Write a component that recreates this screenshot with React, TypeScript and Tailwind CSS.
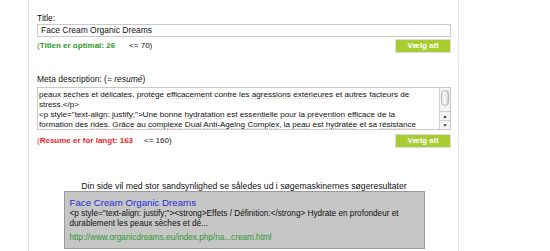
import type { ReactNode } from "react";

// ord med stavekontrol-understregning
function S({ children }: { children: ReactNode }) {
    return (
        <span className="underline decoration-dotted decoration-[#f5c2c2] underline-offset-[1px]">
            {children}
        </span>
    );
}

function VaelgAlt() {
    return (
        <div className="w-[56px] h-[14px] bg-[#a9cc31] border border-[#dcdcdc] text-white font-bold text-[8px] leading-[12px] text-center">
            Vælg alt
        </div>
    );
}

export default function App() {
    return (
        <div className="w-[550px] h-[251px] bg-white overflow-hidden text-[#111]" style={{ fontFamily: '"Liberation Sans", Arial, sans-serif' }}>
            <div className="ml-[28px] w-[431px] h-full border-x border-[#e6e6e6] pl-[8px] pr-[7px] pt-[13px]">
                {/* ---------- TITLE ---------- */}
                <div className="text-[8.5px] leading-[11px]">Title:</div>
                <div className="h-[13px] border border-[#c9c9c9] px-[3px] text-[8.5px] leading-[11px] whitespace-nowrap">
                    Face Cream Organic Dreams
                </div>
                <div className="mt-[2px] flex items-center justify-between">
                    <div className="flex items-center text-[8px] leading-[12px]">
                        <span className="text-[#2f9a2a]">(</span>
                        <span className="text-[#2f9a2a] font-bold">Titlen er optimal: 26</span>
                        <span className="ml-[14px]">&lt;= 70)</span>
                    </div>
                    <VaelgAlt />
                </div>

                {/* ---------- META DESCRIPTION ---------- */}
                <div className="mt-[21px] text-[8.5px] leading-[11px]">
                    Meta description: (= <i>resumé</i>)
                </div>
                <div className="mt-[2px] h-[43px] border border-[#c9c9c9] flex">
                    <div className="flex-1 pl-[1px] pt-[2px] text-[8.1px] leading-[10px] whitespace-nowrap overflow-hidden">
                        <div>
                            <S>peaux</S> <S>sèches</S> et <S>délicates</S>, <S>protège</S> <S>efficacement</S> contre les <S>agressions</S> <S>extérieures</S> et <S>autres</S> <S>facteurs</S> de
                        </div>
                        <div>stress.&lt;/p&gt;</div>
                        <div>
                            &lt;p style="<S>text-align</S>: <S>justify</S>;"&gt;Une bonne <S>hydratation</S> est <S>essentielle</S> pour la <S>prévention</S> <S>efficace</S> de la
                        </div>
                        <div>
                            formation des <S>rides</S>. <S>Grâce</S> au <S>complexe</S> <S>Dual</S> <S>Anti-Ageing</S> <S>Complex</S>, la <S>peau</S> est <S>hydratée</S> et sa <S>résistance</S>
                        </div>
                    </div>
                    <div className="w-[11px] border-l border-[#d0d0d0] bg-[#f4f4f4] flex flex-col">
                        <div className="mx-[1px] mt-[2px] h-[16px] rounded-full border border-[#b5b5b5] bg-gradient-to-r from-[#e9e9e9] via-[#fafafa] to-[#cfcfcf]" />
                        <div className="flex-1" />
                        <div className="h-[9px] border-t border-[#d0d0d0] flex items-center justify-center text-[5px] leading-none text-[#333]">▲</div>
                        <div className="h-[9px] border-t border-[#d0d0d0] flex items-center justify-center text-[5px] leading-none text-[#333]">▼</div>
                    </div>
                </div>
                <div className="mt-[4px] flex items-center justify-between">
                    <div className="flex items-center text-[8px] leading-[12px]">
                        <span className="text-[#ee1c1c]">(</span>
                        <span className="text-[#ee1c1c] font-bold">Resume er for langt: 163</span>
                        <span className="ml-[11px]">&lt;= 160)</span>
                    </div>
                    <VaelgAlt />
                </div>

                {/* ---------- SØGERESULTAT ---------- */}
                <div className="mt-[33px] text-center text-[8.7px] leading-[10px] whitespace-nowrap">
                    Din side vil med stor sandsynlighed se således ud i søgemaskinernes søgeresultater
                </div>
                <div className="mx-auto w-[361px] h-[58px] border border-[#9a9a9a] bg-[#c6c6c6] px-[5px] pt-[5px]">
                    <div className="text-[9.7px] leading-[12px] text-[#2b2bd6] whitespace-nowrap">Face Cream Organic Dreams</div>
                    <div className="text-[8.2px] leading-[10px] whitespace-nowrap">
                        &lt;p style="text-align: justify;"&gt;&lt;strong&gt;Effets / Définition:&lt;/strong&gt; Hydrate en profondeur et
                    </div>
                    <div className="text-[8.2px] leading-[10px] whitespace-nowrap">durablement les peaux sèches et dé...</div>
                    <div className="mt-[4px] text-[8.2px] leading-[10px] text-[#2f9a2f] whitespace-nowrap">
                        http://www.organicdreams.eu/index.php/na...cream.html
                    </div>
                </div>
            </div>
        </div>
    );
}
